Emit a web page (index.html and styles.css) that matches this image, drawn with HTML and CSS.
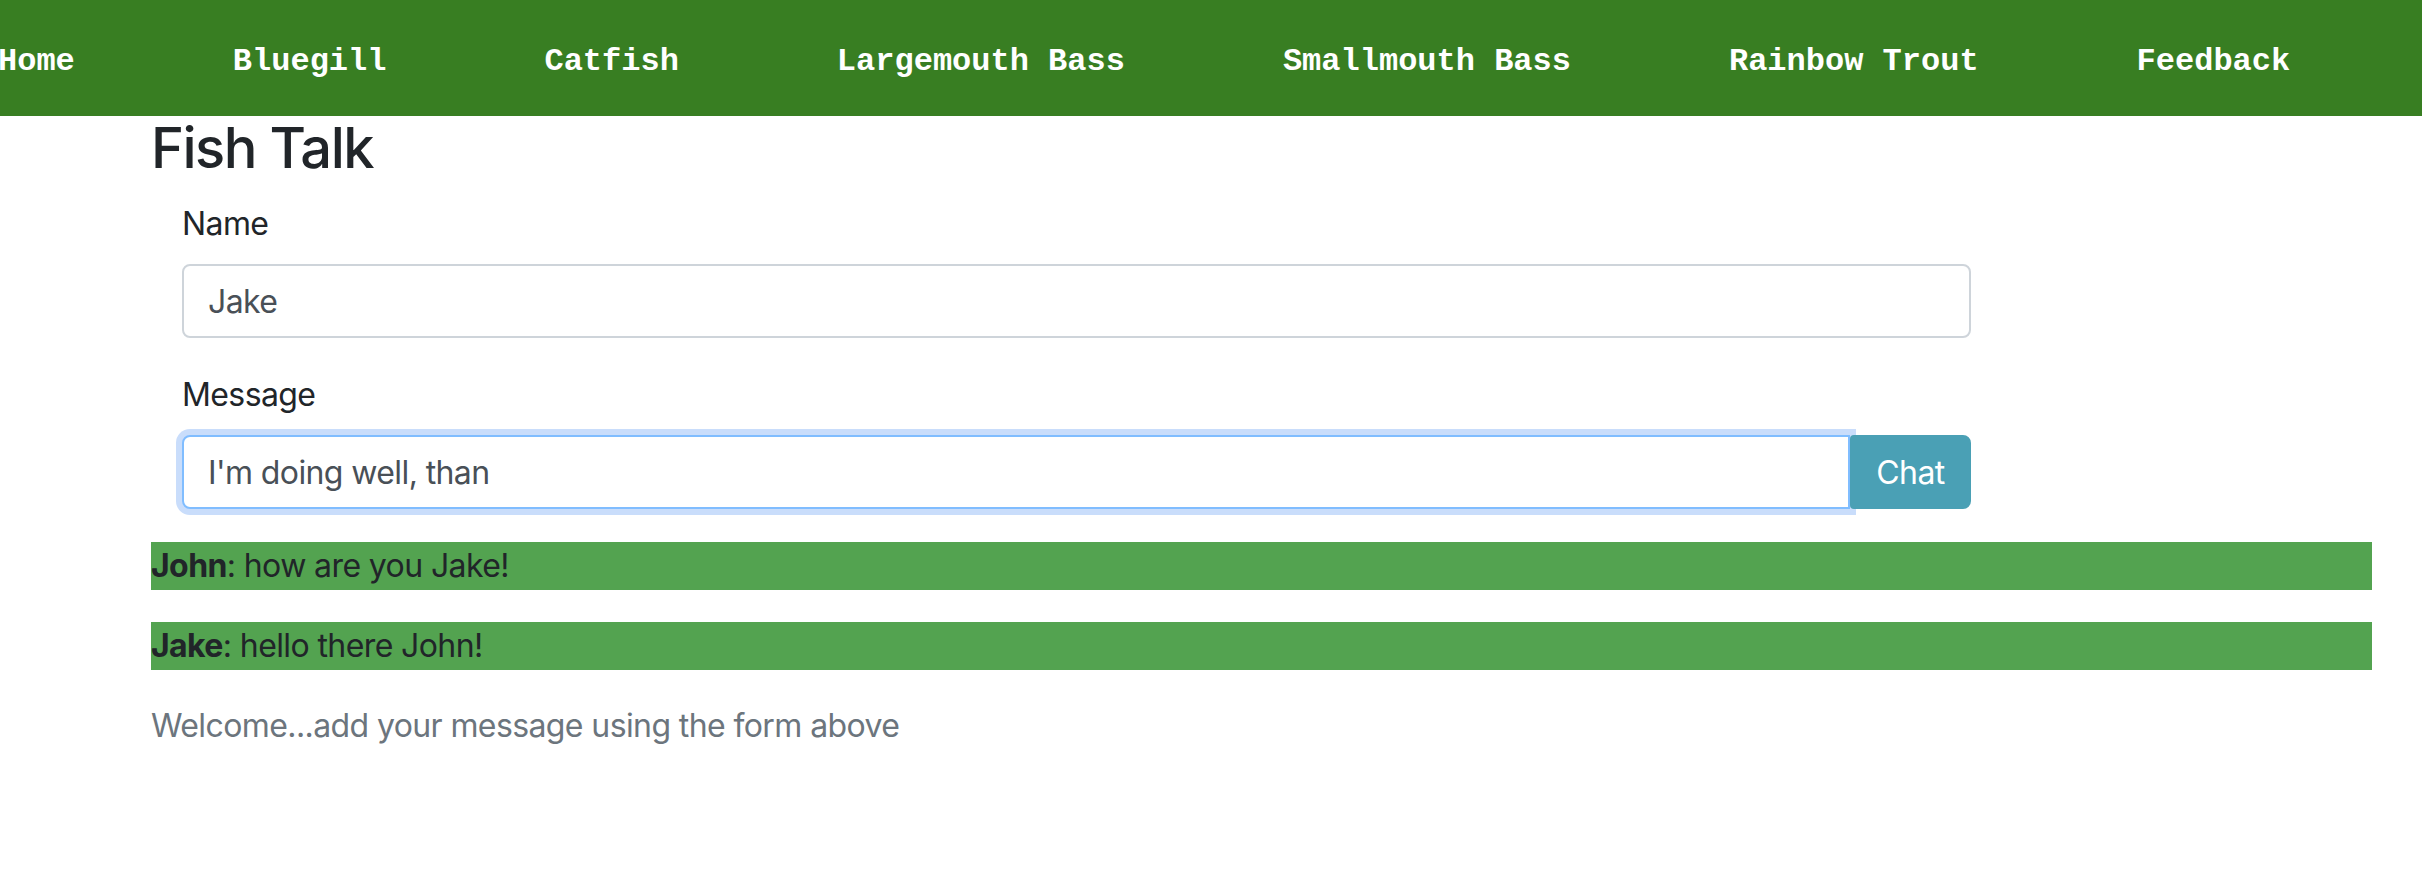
FILE: index.html
```html
<!DOCTYPE html>
<html lang="en">
<head>
<meta charset="utf-8">
<title>Fish Talk</title>
<link rel="stylesheet" href="styles.css">
</head>
<body>
<nav class="topnav">
  <ul class="topnav-list">
    <li><a href="#">Home</a></li>
    <li><a href="#">Bluegill</a></li>
    <li><a href="#">Catfish</a></li>
    <li><a href="#">Largemouth Bass</a></li>
    <li><a href="#">Smallmouth Bass</a></li>
    <li><a href="#">Rainbow Trout</a></li>
    <li><a href="#">Feedback</a></li>
  </ul>
</nav>
<main class="container">
  <h2 class="title">Fish Talk</h2>
  <form class="chat-form">
    <div class="form-group">
      <label class="form-label" for="name">Name</label>
      <input class="form-control" id="name" type="text" value="Jake">
    </div>
    <div class="form-group">
      <label class="form-label" for="msg">Message</label>
      <div class="input-group">
        <input class="form-control focused" id="msg" type="text" value="I'm doing well, than">
        <button class="btn-chat" type="button">Chat</button>
      </div>
    </div>
  </form>
  <div class="messages">
    <p class="msg"><strong>John</strong>: how are you Jake!</p>
    <p class="msg"><strong>Jake</strong>: hello there John!</p>
    <p class="welcome">Welcome...add your message using the form above</p>
  </div>
</main>
</body>
</html>
```

FILE: styles.css
```css
* { box-sizing: border-box; }
html, body { margin: 0; padding: 0; background: #fff; }
body {
  font-family: Inter, "Noto Sans", sans-serif;
  font-size: 32px;
  line-height: 48px;
  letter-spacing: -0.6px;
  color: #212529;
}

.topnav {
  height: 116px;
  background: #387e22;
  display: flex;
  align-items: center;
  padding-top: 1px;
}
.topnav-list {
  list-style: none;
  margin: 0 0 0 -2px;
  padding: 0;
  display: flex;
  gap: 158px;
}
.topnav-list a {
  font-family: "Liberation Mono", "Courier New", monospace;
  font-weight: bold;
  font-size: 32px;
  line-height: 36px;
  letter-spacing: 0;
  color: #fff;
  text-decoration: none;
  white-space: nowrap;
}

.container {
  margin-left: 151px;
  width: 2221px;
}
.title {
  margin: 0;
  font-size: 56px;
  line-height: 64px;
  font-weight: 500;
  letter-spacing: -1.5px;
  color: #212529;
}
.chat-form {
  margin-left: 31px;
  width: 1789px;
  padding-top: 20px;
}
.form-group { margin-bottom: 33px; }
.form-label {
  display: block;
  margin-bottom: 16px;
}
.form-control {
  display: block;
  width: 100%;
  height: 74px;
  padding: 0 24px;
  font-family: inherit;
  font-size: 32px;
  letter-spacing: -0.6px;
  color: #495057;
  background: #fff;
  border: 2px solid #ced4da;
  border-radius: 8px;
  outline: none;
}
.input-group {
  display: flex;
}
.input-group .form-control {
  flex: 1;
  width: auto;
  border-radius: 8px 0 0 8px;
}
.form-control.focused {
  border-color: #80bdff;
  box-shadow: 0 0 0 6px #c9ddfb;
}
.btn-chat {
  width: 121px;
  height: 74px;
  border: none;
  border-radius: 4px 8px 8px 4px;
  background: #4aa0b5;
  color: #fff;
  font-family: inherit;
  font-size: 32px;
  letter-spacing: -0.6px;
  padding: 0;
  position: relative;
  z-index: 1;
}
.messages { padding-top: 0; }
.msg {
  margin: 0 0 32px;
  background: #53a350;
  height: 48px;
}
.msg strong { font-weight: 700; }
.welcome {
  margin: 0;
  color: #6c757d;
}
```
